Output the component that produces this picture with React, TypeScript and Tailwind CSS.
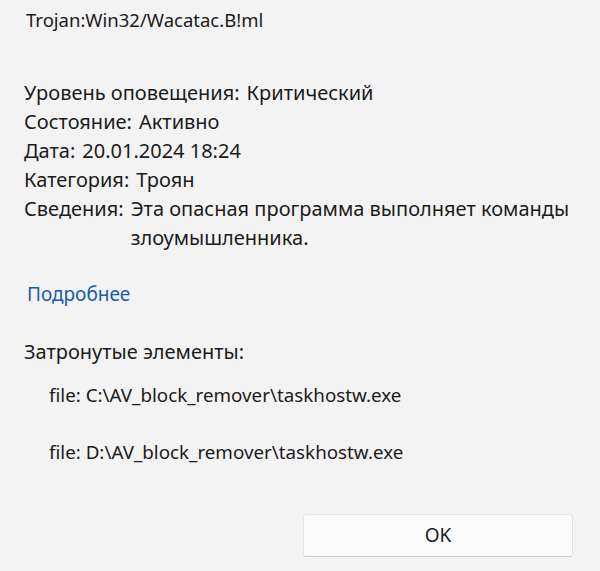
const font = { fontFamily: '"Noto Sans", "Open Sans", Arial, sans-serif' };

const rows: { label: string; value: string }[] = [
  { label: "Уровень оповещения:", value: "Критический" },
  { label: "Состояние:", value: "Активно" },
  { label: "Дата:", value: "20.01.2024 18:24" },
  { label: "Категория:", value: "Троян" },
  { label: "Сведения:", value: "Эта опасная программа выполняет команды злоумышленника." },
];

const files = [
  "file: C:\\AV_block_remover\\taskhostw.exe",
  "file: D:\\AV_block_remover\\taskhostw.exe",
];

export default function App() {
  return (
    <div
      className="w-[600px] h-[571px] bg-[#f3f3f3] text-[#1b1b1b] flex flex-col overflow-hidden"
      style={font}
    >
      <div className="pl-[26px] pt-[8px] text-[18.5px] leading-[24px]">Trojan:Win32/Wacatac.B!ml</div>

      <div className="pl-[24px] pt-[46px] flex flex-col text-[20px] leading-[29px]">
        {rows.map(({ label, value }) => (
          <div key={label} className="flex gap-[7px]">
            <span className="whitespace-nowrap">{label}</span>
            <span className="max-w-[460px]">{value}</span>
          </div>
        ))}
      </div>

      <a className="pl-[27px] pt-[29px] text-[19px] leading-[26px] text-[#1a5aa8] w-fit">Подробнее</a>

      <div className="pl-[24px] pt-[32px] text-[20px] leading-[26px]">Затронутые элементы:</div>

      <div className="pl-[49px] pt-[18px] flex flex-col gap-[33px] text-[18.8px] leading-[24px]">
        {files.map((f) => (
          <div key={f}>{f}</div>
        ))}
      </div>

      <div className="flex justify-end pr-[27px] mt-auto mb-[14px]">
        <button className="w-[270px] h-[43px] bg-[#fbfbfb] border border-[#e5e5e5] border-b-[#cccccc] rounded-[3px] text-[19px] text-[#1b1b1b]">
          OK
        </button>
      </div>
    </div>
  );
}
